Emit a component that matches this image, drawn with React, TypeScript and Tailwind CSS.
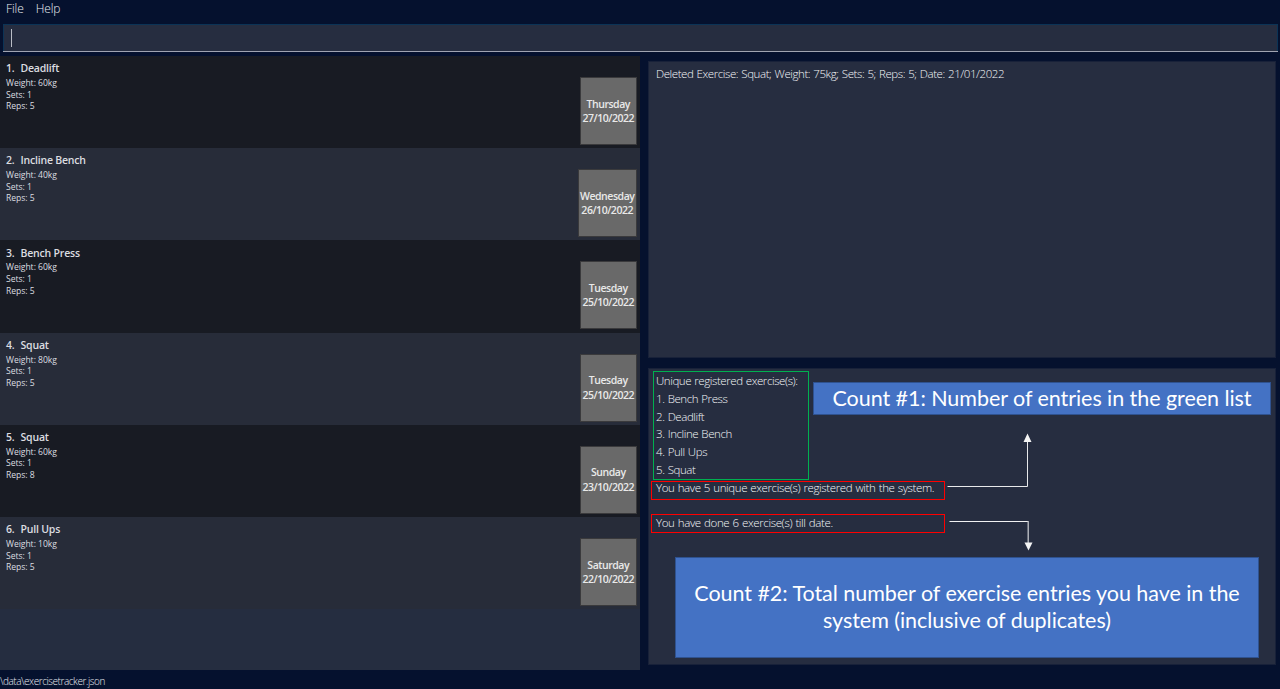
type Exercise = {
  name: string;
  weight: string;
  sets: number;
  reps: number;
  day: string;
  date: string;
};

const exercises: Exercise[] = [
  { name: "Deadlift", weight: "60kg", sets: 1, reps: 5, day: "Thursday", date: "27/10/2022" },
  { name: "Incline Bench", weight: "40kg", sets: 1, reps: 5, day: "Wednesday", date: "26/10/2022" },
  { name: "Bench Press", weight: "60kg", sets: 1, reps: 5, day: "Tuesday", date: "25/10/2022" },
  { name: "Squat", weight: "80kg", sets: 1, reps: 5, day: "Tuesday", date: "25/10/2022" },
  { name: "Squat", weight: "60kg", sets: 1, reps: 8, day: "Sunday", date: "23/10/2022" },
  { name: "Pull Ups", weight: "10kg", sets: 1, reps: 5, day: "Saturday", date: "22/10/2022" },
];

const uniqueNames = ["Bench Press", "Deadlift", "Incline Bench", "Pull Ups", "Squat"];

function ExerciseRow({ item, index }: { item: Exercise; index: number }) {
  return (
    <li
      className={`flex h-[92.2px] shrink-0 justify-between pl-1.5 pr-[3.5px] ${
        index % 2 === 0 ? "bg-[#181b23]" : "bg-[#272c39]"
      }`}
    >
      <div className="pt-[5.5px] text-[#dcdde0]">
        <h2 className="flex h-[15px] items-center gap-[6px] text-[10.5px] font-semibold tracking-[-0.2px] whitespace-nowrap">
          <span>{index + 1}.</span>
          <span>{item.name}</span>
        </h2>
        <div className="pt-[1.5px] text-[8.6px] leading-[11.6px] tracking-[-0.05px]">
          <p>Weight: {item.weight}</p>
          <p>Sets: {item.sets}</p>
          <p>Reps: {item.reps}</p>
        </div>
      </div>
      <div className="mt-[21px] flex h-[68px] min-w-[56.5px] flex-col items-center justify-center border border-[#3a3a3c] bg-[#696969] px-px text-[10.5px] leading-[14.4px] font-semibold tracking-[-0.45px] text-[#e9e9e9]">
        <span>{item.day}</span>
        <span>{item.date}</span>
      </div>
    </li>
  );
}

function Connectors() {
  return (
    <svg className="absolute top-[64px] left-[298px] h-[120px] w-[90px]" viewBox="0 0 90 120" fill="none">
      <path d="M0.5 53.5H80.5V8" stroke="#e8e9eb" />
      <path d="M80.5 0.5L84.5 9H76.5Z" fill="#f4f4f4" />
      <path d="M2.5 88.5H81" stroke="#f0f1f2" />
      <path d="M81.2 88V110" stroke="#c4c6cb" strokeWidth="1.3" />
      <path d="M81.5 117.5L77.5 109.5H85.5Z" fill="#f4f4f4" />
    </svg>
  );
}

export default function App() {
  return (
    <div className="flex h-[689px] w-[1280px] flex-col overflow-hidden bg-[#05112e] font-['Open_Sans','Noto_Sans',sans-serif]">
      <nav className="flex h-6 shrink-0 gap-3 pl-1.5 text-[12px] leading-[17px] font-light text-[#eceef2]">
        <span className="tracking-[-0.1px]">File</span>
        <span className="tracking-[-0.1px]">Help</span>
      </nav>

      <div className="mr-[2px] mb-px ml-[3px] flex h-[27px] shrink-0 items-center border border-b-0 border-[#0b3356] bg-[#262d40] pl-[7px] shadow-[0_1px_0_#a0a4b2]">
        <span className="h-[18px] w-px bg-[#b9bdc6]" />
      </div>

      <main className="flex h-[618px] shrink-0 pt-1">
        <ul className="flex w-[640px] shrink-0 flex-col bg-[#252d40]">
          {exercises.map((item, i) => (
            <ExerciseRow key={i} item={item} index={i} />
          ))}
        </ul>

        <div className="flex flex-1 flex-col gap-[10px] pt-[5px] pr-1 pb-[5px] pl-[8px] text-[11.5px] font-light tracking-[-0.42px] text-[#f4f6f8] [word-spacing:0.6px]">
          <section className="h-[297px] border border-[#182139] bg-[#262d40] px-[7px] pt-[3px] leading-[17.8px]">
            <p className="whitespace-nowrap">
              Deleted Exercise: Squat; Weight: 75kg; Sets: 5; Reps: 5; Date: 21/01/2022
            </p>
          </section>

          <section className="relative h-[297px] border border-[#182139] bg-[#262d40] pt-[2px] leading-[17.75px] whitespace-nowrap">
            <div className="ml-[4px] h-[109px] w-[156px] border border-[#00b050] pl-[2px]">
              <p>Unique registered exercise(s):</p>
              <ol>
                {uniqueNames.map((name, i) => (
                  <li key={name}>
                    {i + 1}. {name}
                  </li>
                ))}
              </ol>
            </div>
            <p className="mt-px ml-[2px] h-[19px] w-[294px] border border-[#ff0000] pl-[4px] leading-[11px] tracking-[-0.38px]">
              You have 5 unique exercise(s) registered with the system.
            </p>
            <p className="mt-[14px] ml-[2px] h-[19px] w-[294px] border border-[#ff0000] pl-[4px] leading-[16px] tracking-[-0.36px]">
              You have done 6 exercise(s) till date.
            </p>

            <div className="absolute top-[13px] left-[164px] flex h-[33px] w-[458px] items-center justify-center border border-[#2f528f] bg-[#4472c4] font-['Lato',sans-serif] text-[21.5px] font-normal tracking-[-0.05px] text-white [word-spacing:0px]">
              <span>Count #1: Number of entries in the green list</span>
            </div>
            <Connectors />
            <div className="absolute top-[188px] left-[26px] flex h-[101px] w-[584px] flex-col items-center justify-center border border-[#2f528f] bg-[#4472c4] pb-px font-['Lato',sans-serif] text-[21.5px] leading-[27px] font-normal tracking-[-0.04px] text-white [word-spacing:0px]">
              <span>Count #2: Total number of exercise entries you have in the</span>
              <span>system (inclusive of duplicates)</span>
            </div>
          </section>
        </div>
      </main>

      <footer className="flex flex-1 items-center pt-[3px] text-[10px] font-light tracking-[-0.44px] text-[#e8eaee]">
        \data\exercisetracker.json
      </footer>
    </div>
  );
}
